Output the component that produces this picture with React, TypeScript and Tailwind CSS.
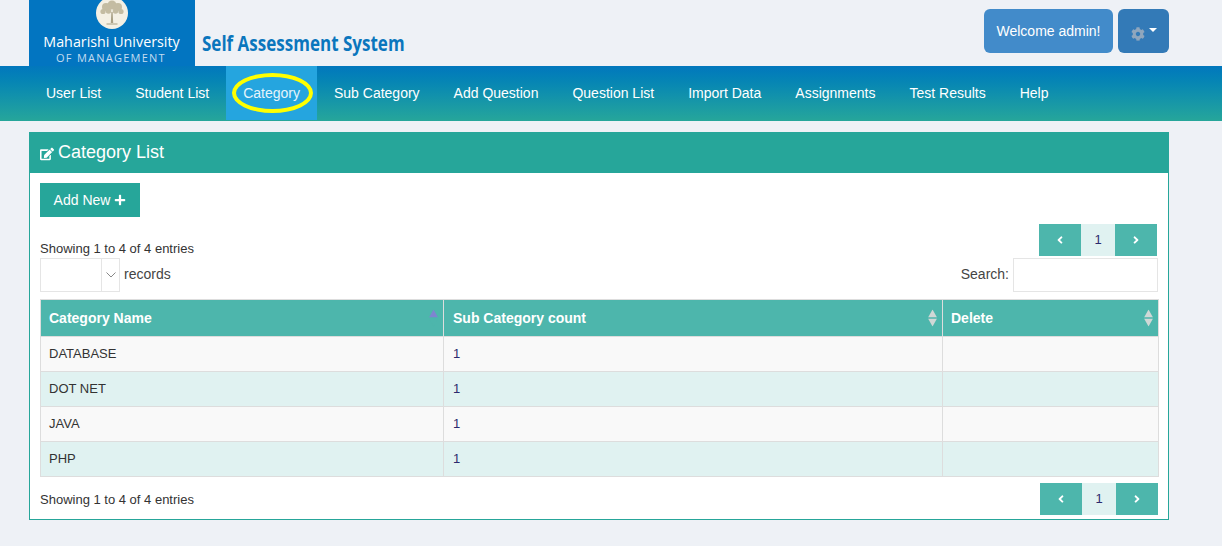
import { FaAngleLeft, FaAngleRight, FaCog, FaPlus, FaEdit } from 'react-icons/fa'

const navItems = ['User List', 'Student List', 'Category', 'Sub Category', 'Add Question', 'Question List', 'Import Data', 'Assignments', 'Test Results', 'Help']
const rows = ['DATABASE', 'DOT NET', 'JAVA', 'PHP']

function TreeLogo() {
  return (
    <svg width="32" height="34" viewBox="0 0 32 34" className="block">
      <circle cx="16" cy="17" r="16" fill="#f4f0e4" />
      <g fill="#c4bca2">
        <circle cx="16" cy="9" r="4.5" />
        <circle cx="10" cy="11" r="4" />
        <circle cx="22" cy="11" r="4" />
        <circle cx="7" cy="15.5" r="2.6" />
        <circle cx="25" cy="15.5" r="2.6" />
        <circle cx="12.5" cy="15" r="2.8" />
        <circle cx="19.5" cy="15" r="2.8" />
      </g>
      <path d="M14.8 27 L15.4 16 L16.6 16 L17.2 27 Z M10.5 27.5 H21.5 V28.5 H10.5 Z" fill="#a89f84" />
    </svg>
  )
}

function SortArrows({ active = false }: { active?: boolean }) {
  return (
    <span className="absolute right-[5px] top-1/2 flex -translate-y-1/2 flex-col gap-[1px]">
      <svg width="9" height="8" viewBox="0 0 9 8" className="block">
        <path d="M4.5 0 L9 8 H0 Z" fill={active ? '#7e85d0' : '#cfd8d6'} />
      </svg>
      <svg width="9" height="8" viewBox="0 0 9 8" className="block">
        <path d="M0 0 H9 L4.5 8 Z" fill={active ? '#4db6ac' : '#cfd8d6'} />
      </svg>
    </span>
  )
}

function Pager() {
  return (
    <div className="flex h-8 text-sm">
      <div className="flex w-[42px] items-center justify-center bg-[#4db6ac] text-white"><FaAngleLeft size={12} /></div>
      <div className="flex w-[34px] items-center justify-center bg-[#e0f2f1] text-[13px] text-[#2b2a6e]">1</div>
      <div className="flex w-[42px] items-center justify-center bg-[#4db6ac] text-white"><FaAngleRight size={12} /></div>
    </div>
  )
}

export default function App() {
  return (
    <div className="h-[546px] w-full overflow-hidden bg-[#eef1f6] font-['Liberation_Sans',Arial,sans-serif] text-sm text-[#333]">
      {/* Header */}
      <header className="flex h-[66px] justify-between pl-[29px] pr-[53px]">
        <div className="flex">
          <div className="flex w-[166px] flex-col items-center overflow-hidden bg-[#0275c1] font-['Open_Sans',sans-serif] text-white">
            <div className="-mt-[4px] -ml-[1px]"><TreeLogo /></div>
            <div className="-ml-[1px] mt-[3px] text-[14.3px] leading-[17px] whitespace-nowrap">Maharishi University</div>
            <div className="-ml-[2px] mt-[1px] text-[11px] leading-[13px] tracking-[1.25px] text-[#c3dcf0] whitespace-nowrap">OF MANAGEMENT</div>
          </div>
          <div className="ml-[7px] mt-[30px] origin-left scale-x-[0.81] font-['Open_Sans',sans-serif] text-[21px] leading-[26px] font-bold whitespace-nowrap text-[#0a76bd]">
            Self Assessment System
          </div>
        </div>
        <div className="flex items-start gap-[5px] pt-[9px]">
          <div className="flex h-[44px] w-[129px] items-center justify-center rounded-[6px] bg-[#428bca] text-white">Welcome admin!</div>
          <div className="flex h-[44px] w-[51px] items-center justify-center gap-[4px] rounded-[6px] bg-[#337ab7]">
            <FaCog size={14} className="mt-[5px] text-[#8fa6bd]" />
            <span className="-mt-[3px] h-0 w-0 border-x-[4px] border-t-[4px] border-x-transparent border-t-white" />
          </div>
        </div>
      </header>

      {/* Nav */}
      <nav className="h-[55px] bg-gradient-to-b from-[#0277bd] to-[#26a69a] pl-[29px]">
        <ul className="flex h-[54px]">
          {navItems.map((item) => (
            <li
              key={item}
              className={`relative flex items-center px-[17px] whitespace-nowrap ${item === 'Category' ? 'bg-[#25a5df] text-[#e6f4fb]' : 'text-white'}`}
            >
              {item}
              {item === 'Category' && (
                <span className="absolute left-[6px] top-[7px] h-[40px] w-[81px] rounded-[50%] border-[4px] border-[#ffff00]" />
              )}
            </li>
          ))}
        </ul>
      </nav>

      {/* Panel */}
      <section className="ml-[29px] mt-[11px] w-[1140px] border border-[#26a69a] bg-white">
        <h2 className="-mx-px -mt-px flex h-[41px] items-center gap-[4px] bg-[#26a69a] pl-[11px] text-[18px] text-white">
          <FaEdit size={14} className="mt-[2px]" />
          Category List
        </h2>
        <div className="px-[10px] pt-[10px] pb-[4px]">
          <div className="flex h-[34px] w-[100px] items-center justify-center gap-[4px] bg-[#26a69a] text-white">
            Add New <FaPlus size={12} />
          </div>

          <div className="mt-[7px] flex items-end justify-between pr-[1px]">
            <div className="-mb-[1px] text-[13px] leading-[17px]">Showing 1 to 4 of 4 entries</div>
            <Pager />
          </div>

          <div className="mt-[2px] flex items-center justify-between">
            <div className="flex items-center">
              <div className="flex h-[34px] w-[80px] border border-[#e5e5e5]">
                <div className="flex-1" />
                <div className="flex w-[18px] items-center justify-center border-l border-[#e5e5e5]">
                  <svg width="10" height="6" viewBox="0 0 10 6" fill="none" stroke="#888" strokeWidth="1">
                    <path d="M0.5 0.5 L5 5 L9.5 0.5" />
                  </svg>
                </div>
              </div>
              <span className="-mt-[2px] ml-[4px] text-[#444]">records</span>
            </div>
            <div className="flex items-center gap-[4px]">
              <span className="-mt-[2px] text-[#444]">Search:</span>
              <div className="h-[34px] w-[145px] border border-[#e5e5e5]" />
            </div>
          </div>

          <table className="mt-[7px] w-[1118px] table-fixed border-collapse border border-[#ddd]">
            <colgroup>
              <col className="w-[403px]" />
              <col className="w-[499px]" />
              <col className="w-[216px]" />
            </colgroup>
            <thead>
              <tr className="h-[37px] bg-[#4db6ac] text-left text-white">
                <th className="relative border border-[#ddd] pl-[8px] font-bold">Category Name<SortArrows active /></th>
                <th className="relative border border-[#ddd] pl-[9px] font-bold">Sub Category count<SortArrows /></th>
                <th className="relative border border-[#ddd] pl-[8px] font-bold">Delete<SortArrows /></th>
              </tr>
            </thead>
            <tbody className="text-[13px]">
              {rows.map((name, i) => (
                <tr key={name} className={`h-[35px] ${i % 2 === 0 ? 'bg-[#f9f9f9]' : 'bg-[#e0f2f1]'}`}>
                  <td className="border border-[#ddd] pl-[8px]">{name}</td>
                  <td className="border border-[#ddd] pl-[9px] text-[#2b2a6e]">1</td>
                  <td className="border border-[#ddd]" />
                </tr>
              ))}
            </tbody>
          </table>

          <div className="mt-[6px] flex items-center justify-between">
            <div className="mt-[2px] text-[13px]">Showing 1 to 4 of 4 entries</div>
            <Pager />
          </div>
        </div>
      </section>
    </div>
  )
}
